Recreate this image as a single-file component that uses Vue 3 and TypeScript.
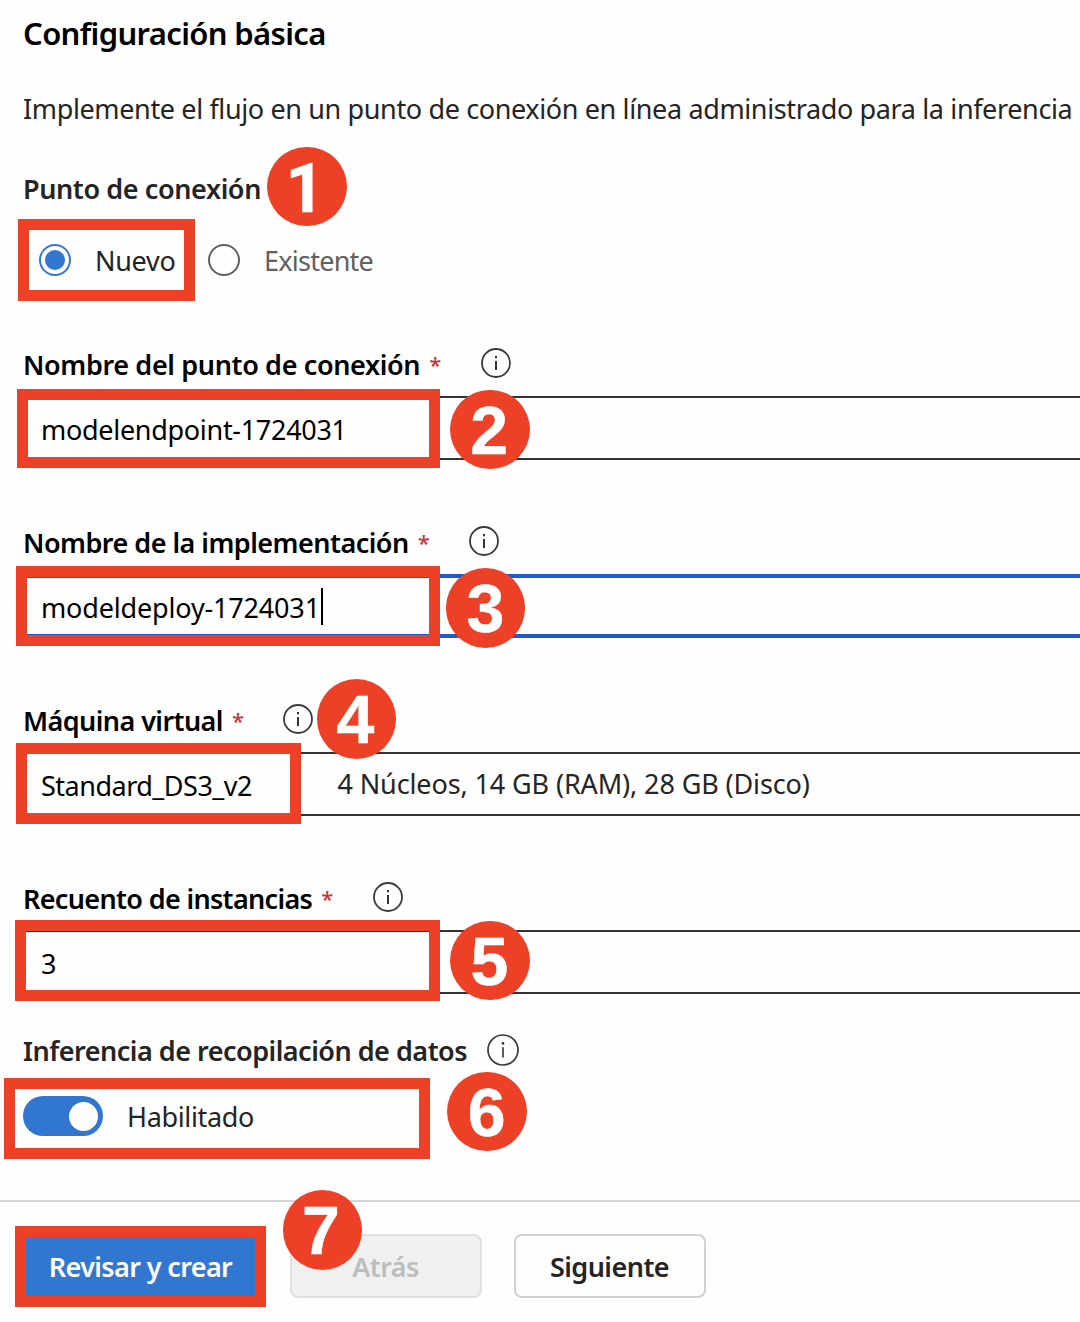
<script setup lang="ts">
interface Field {
  id: string
  label: string
  value: string
  detail?: string
  focused?: boolean
}

const fields: Field[] = [
  { id: 'endpoint', label: 'Nombre del punto de conexión', value: 'modelendpoint-1724031' },
  { id: 'deployment', label: 'Nombre de la implementación', value: 'modeldeploy-1724031', focused: true },
  { id: 'machine', label: 'Máquina virtual', value: 'Standard_DS3_v2', detail: '4 Núcleos, 14 GB (RAM), 28 GB (Disco)' },
  { id: 'instances', label: 'Recuento de instancias', value: '3' },
]

const steps: number[] = [1, 2, 3, 4, 5, 6, 7]
</script>

<template>
  <main class="page">
    <h1 class="title"><span>Configuración básica</span></h1>
    <p class="intro"><span>Implemente el flujo en un punto de conexión en línea administrado para la inferencia</span></p>

    <h2 class="group-label"><span>Punto de conexión</span></h2>
    <div class="radios">
      <div class="radio checked"><i class="dot"></i><span>Nuevo</span></div>
      <div class="radio"><i class="dot"></i><span>Existente</span></div>
    </div>

    <section v-for="f in fields" :key="f.id" class="field" :class="f.id">
      <div class="label">
        <span class="name">{{ f.label }}</span>
        <span class="star">*</span>
        <svg class="info" viewBox="0 0 32 32">
          <circle cx="16" cy="16" r="14" fill="none" stroke="#3a3a3a" stroke-width="1.8" />
          <path d="M16 9V11.2M16 14V23" stroke="#333" stroke-width="2" />
        </svg>
      </div>
      <div class="input" :class="{ focused: f.focused }">
        <span class="value">{{ f.value }}</span>
        <i v-if="f.focused" class="caret"></i>
        <span v-if="f.detail" class="detail">{{ f.detail }}</span>
      </div>
    </section>

    <div class="collect">
      <span>Inferencia de recopilación de datos</span>
      <svg class="info" viewBox="0 0 32 32">
        <circle cx="16" cy="16" r="15" fill="none" stroke="#3a3a3a" stroke-width="1.7" />
        <circle cx="16" cy="9.4" r="1.3" fill="#333" />
        <path d="M16 13.8V23" stroke="#333" stroke-width="1.6" stroke-linecap="round" />
      </svg>
    </div>
    <div class="toggle-row">
      <div class="toggle"><i class="knob"></i></div>
      <span class="state">Habilitado</span>
    </div>

    <footer class="footer">
      <button class="btn primary"><span>Revisar y crear</span></button>
      <button class="btn back" disabled><span>Atrás</span></button>
      <button class="btn next"><span>Siguiente</span></button>
    </footer>

    <template v-for="n in steps" :key="n">
      <div class="frame" :class="'frame-' + n"></div>
      <div class="badge" :class="'badge-' + n">{{ n }}</div>
    </template>
  </main>
</template>

<style>
body {
  background: #fefefe;
}
</style>

<style scoped>
* {
  box-sizing: border-box;
}
.page {
  position: relative;
  width: 1080px;
  height: 1322px;
  overflow: hidden;
  background: #fefefe;
  color: #242424;
  font-family: 'Noto Sans', 'Open Sans', sans-serif;
  font-size: 27px;
  white-space: nowrap;
}
.title,
.intro,
.group-label {
  display: flex;
  align-items: center;
  margin: 0;
  padding-left: 23px;
}
.title {
  height: 65px;
  font-size: 31px;
  font-weight: 600;
  letter-spacing: -0.65px;
  color: #000;
}
.intro {
  height: 86px;
  letter-spacing: -0.37px;
}
.group-label {
  height: 74px;
  font-size: 27px;
  font-weight: 600;
  letter-spacing: -0.4px;
}
.radios {
  display: flex;
  height: 70px;
  padding-left: 39px;
  margin-bottom: 37px;
}
.radio {
  display: flex;
  flex: none;
  align-items: center;
  gap: 24px;
  width: 169px;
  letter-spacing: -0.75px;
  color: #616161;
}
.radio.checked {
  letter-spacing: -0.3px;
  color: #242424;
}
.dot {
  display: flex;
  flex: none;
  align-items: center;
  justify-content: center;
  width: 32px;
  height: 32px;
  border: 2px solid #616161;
  border-radius: 50%;
}
.checked .dot {
  border-color: #3277cf;
}
.checked .dot::after {
  content: '';
  width: 20px;
  height: 20px;
  border-radius: 50%;
  background: #3277cf;
}
.field {
  margin-bottom: 50px;
}
.field.instances {
  margin-bottom: 34px;
}
.label {
  display: flex;
  align-items: center;
  height: 64px;
  padding-left: 23px;
  font-weight: 600;
  color: #000;
}
.endpoint .name { letter-spacing: -0.36px; }
.deployment .name { letter-spacing: -0.52px; }
.machine .name { letter-spacing: -0.57px; }
.instances .name { letter-spacing: -0.66px; }
.endpoint .value { letter-spacing: -0.3px; }
.deployment .value { letter-spacing: -0.17px; }
.machine .value { letter-spacing: -0.5px; }
.star {
  margin-left: 9px;
  width: 13px;
  font-size: 22px;
  line-height: 30px;
  font-weight: 500;
  color: #c4363a;
}
.info {
  display: block;
  flex: none;
  width: 32px;
  height: 32px;
}
.label .info {
  margin: -2px 0 0 37.5px;
}
.input {
  display: flex;
  align-items: center;
  height: 64px;
  margin: 0 -4px 0 23px;
  padding: 2px 0 0 16px;
  border: 2px solid #333;
  color: #000;
}
.input.focused {
  border: 4px solid #2259d1;
  padding-left: 14px;
}
.caret {
  width: 2px;
  height: 37px;
  margin: -1px 0 0 1px;
  background: #000;
}
.detail {
  margin: -4px 0 0 85.5px;
  letter-spacing: -0.12px;
  color: #242424;
}
.collect {
  display: flex;
  align-items: center;
  height: 44px;
  padding-left: 23px;
  font-weight: 600;
  letter-spacing: -0.5px;
}
.collect .info {
  margin-left: 20px;
}
.toggle-row {
  display: flex;
  align-items: center;
  gap: 24px;
  height: 88px;
  padding-left: 23px;
}
.state {
  letter-spacing: -0.35px;
}
.toggle {
  display: flex;
  align-items: center;
  justify-content: flex-end;
  width: 80px;
  height: 40px;
  padding-right: 5px;
  border-radius: 20px;
  background: #3277cf;
}
.knob {
  width: 29px;
  height: 29px;
  border-radius: 50%;
  background: #fff;
}
.footer {
  display: flex;
  margin-top: 40px;
  padding: 32px 0 0 24px;
  border-top: 2px solid #d5d5d5;
}
.btn {
  display: flex;
  align-items: center;
  justify-content: center;
  width: 192px;
  height: 64px;
  margin-right: 32px;
  padding: 1px 1px 0 0;
  border: 2px solid #d1d1d1;
  border-radius: 8px;
  background: #fefefe;
  color: #242424;
  font-family: inherit;
  font-size: 27px;
  font-weight: 600;
  letter-spacing: -0.55px;
}
.btn.primary {
  width: 234px;
  border-color: #3277cf;
  background: #3277cf;
  color: #fff;
  letter-spacing: -0.63px;
}
.btn.back {
  border-color: #e0e0e0;
  background: #f0f0f0;
  color: #bdbdbd;
}
.frame {
  position: absolute;
  border: 11px solid #ec4127;
}
.frame-1 { left: 18px; top: 219px; width: 177px; height: 82px; }
.frame-2 { left: 17px; top: 389px; width: 423px; height: 79px; }
.frame-3 { left: 16px; top: 566px; width: 424px; height: 80px; }
.frame-4 { left: 16px; top: 743px; width: 285px; height: 81px; }
.frame-5 { left: 15px; top: 920px; width: 425px; height: 81px; }
.frame-6 { left: 4px; top: 1078px; width: 426px; height: 81px; }
.frame-7 { left: 15px; top: 1226px; width: 251px; height: 81px; }
.badge {
  position: absolute;
  width: 79.5px;
  height: 79.5px;
  border-radius: 50%;
  background: #ec4127;
  color: #fff;
  font: bold 68px/80px 'Liberation Sans', Arial, sans-serif;
  -webkit-text-stroke: 0.5px #fff;
  text-align: center;
}
.badge-1 { left: 267.3px; top: 146.7px; padding-right: 4px; font-family: Roboto, sans-serif; line-height: 84px; }
.badge-2 { left: 450px; top: 389.5px; padding-right: 1px; }
.badge-3 { left: 445.7px; top: 568.2px; }
.badge-4 { left: 316.7px; top: 679px; padding-right: 2px; }
.badge-5 { left: 450.2px; top: 920.7px; padding-right: 1px; }
.badge-6 { left: 447px; top: 1071.5px; }
.badge-7 { left: 282.7px; top: 1190.2px; padding-right: 3px; }
</style>
